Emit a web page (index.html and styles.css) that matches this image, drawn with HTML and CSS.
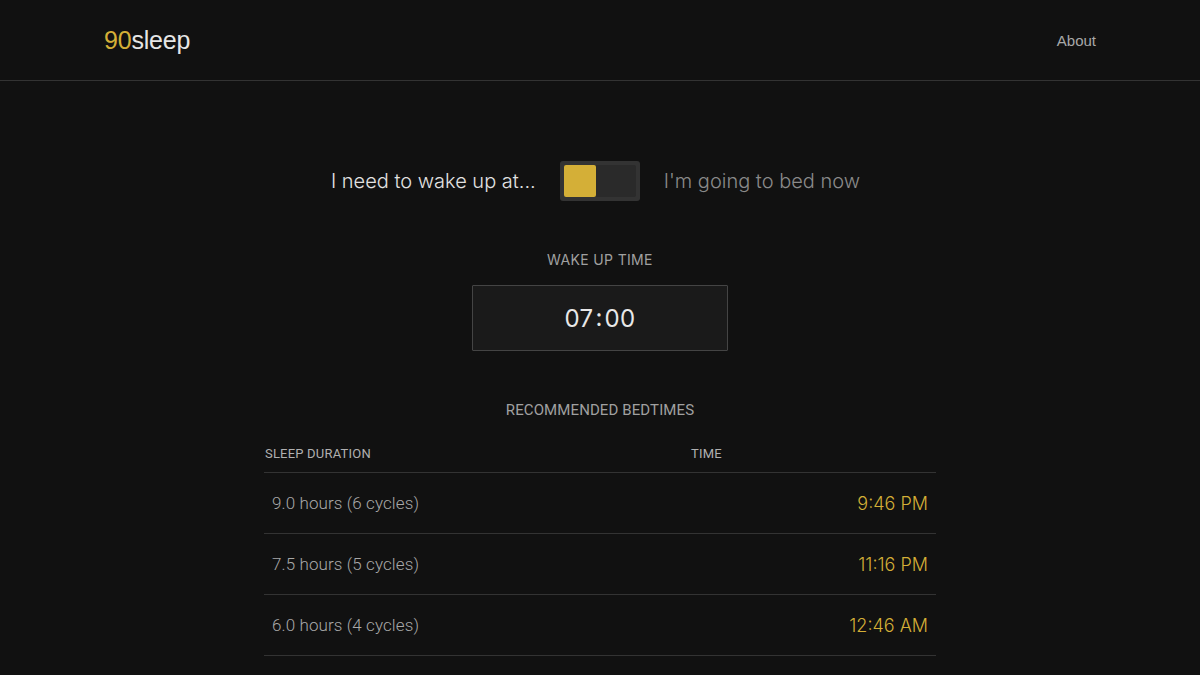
FILE: index.html
```html
<!DOCTYPE html>
<html lang="en">
<head>
<meta charset="utf-8">
<title>90sleep</title>
<link rel="stylesheet" href="styles.css">
</head>
<body>
<header class="site-header">
  <div class="header-inner">
    <a class="logo" href="#"><span class="logo-num">90</span>sleep</a>
    <nav class="nav"><a href="#" class="nav-link">About</a></nav>
  </div>
</header>
<main class="main">
  <div class="mode-row">
    <span class="mode-label active">I need to wake up at...</span>
    <div class="toggle"><div class="toggle-track"><div class="toggle-knob"></div></div></div>
    <span class="mode-label">I'm going to bed now</span>
  </div>
  <div class="time-section">
    <div class="section-label">WAKE UP TIME</div>
    <div class="time-input"><span>07</span><span class="colon">:</span><span>00</span></div>
  </div>
  <div class="results">
    <div class="section-label">RECOMMENDED BEDTIMES</div>
    <table class="table">
      <thead>
        <tr><th class="th-dur">SLEEP DURATION</th><th class="th-time">TIME</th></tr>
      </thead>
      <tbody>
        <tr><td class="dur">9.0 hours (6 cycles)</td><td class="time">9:46 PM</td></tr>
        <tr><td class="dur">7.5 hours (5 cycles)</td><td class="time">11:16 PM</td></tr>
        <tr><td class="dur">6.0 hours (4 cycles)</td><td class="time">12:46 AM</td></tr>
      </tbody>
    </table>
  </div>
</main>
</body>
</html>
```
FILE: styles.css
```css
* { box-sizing: border-box; }
html, body { margin: 0; padding: 0; }
body {
  background: #111111;
  color: #e0e0e0;
  font-family: Inter, "Liberation Sans", sans-serif;
  overflow: hidden;
  height: 675px;
}
a { text-decoration: none; }
.site-header {
  height: 81px;
  border-bottom: 1px solid #333333;
}
.header-inner {
  max-width: 992px;
  margin: 0 auto;
  height: 80px;
  display: flex;
  align-items: center;
  justify-content: space-between;
}
.logo {
  font-family: "Liberation Sans", Arial, sans-serif;
  font-size: 25px;
  color: #e6e6e6;
  letter-spacing: -0.2px;
  padding-top: 1px;
}
.logo-num { color: #d4af37; }
.nav-link {
  font-family: "Liberation Sans", Arial, sans-serif;
  font-size: 15px;
  color: #a8a8a8;
  padding-top: 1px;
}
.main {
  width: 672px;
  margin: 0 auto;
  padding-top: 80px;
}
.mode-row {
  display: flex;
  align-items: center;
  justify-content: center;
  gap: 24px;
  height: 40px;
  padding-right: 9px;
}
.mode-label {
  font-size: 20px;
  color: #8a8a8a;
  font-weight: 300;
}
.mode-label.active { color: #e2e2e2; }
.toggle {
  width: 80px;
  height: 40px;
  background: #333333;
  border-radius: 3px;
  padding: 4px;
}
.toggle-track {
  width: 72px;
  height: 32px;
  background: #2a2a2a;
  border-radius: 2px;
}
.toggle-knob {
  width: 32px;
  height: 32px;
  background: #d4af37;
  border-radius: 2px;
}
.time-section {
  margin-top: 50px;
  display: flex;
  flex-direction: column;
  align-items: center;
}
.section-label {
  font-size: 14px;
  color: #a0a0a0;
  text-align: center;
  line-height: 18px;
  letter-spacing: 0.35px;
}
.results .section-label {
  font-family: Roboto, "Liberation Sans", sans-serif;
  font-size: 15px;
  letter-spacing: 0.1px;
}
.time-input {
  margin-top: 16px;
  width: 256px;
  height: 66px;
  background: #1a1a1a;
  border: 1px solid #444444;
  border-radius: 1px;
  display: flex;
  align-items: center;
  justify-content: center;
  font-size: 24px;
  color: #e8e8e8;
  letter-spacing: 0.3px;
}
.colon { margin: 0 2px; position: relative; top: -1px; }
.results { margin-top: 50px; }
.table {
  margin-top: 16px;
  width: 100%;
  border-collapse: collapse;
  font-family: Roboto, "Liberation Sans", sans-serif;
}
.table th {
  font-size: 13px;
  font-weight: 400;
  color: #b0b0b0;
  text-align: left;
  padding: 11px 1px 11px 1px;
  border-bottom: 1px solid #333333;
  letter-spacing: 0.2px;
}
.table .th-dur { width: 426px; }
.table td {
  font-size: 17px;
  font-weight: 300;
  padding: 20px 8px;
  line-height: 20px;
  border-bottom: 1px solid #333333;
  letter-spacing: 0.1px;
}
.dur { color: #a8a8a8; }
.table td.time {
  font-family: Inter, "Liberation Sans", sans-serif;
  color: #d4af37;
  text-align: right;
  font-size: 18px;
  font-weight: 300;
  letter-spacing: 0;
  padding: 21px 8px 19px 8px;
}
```
